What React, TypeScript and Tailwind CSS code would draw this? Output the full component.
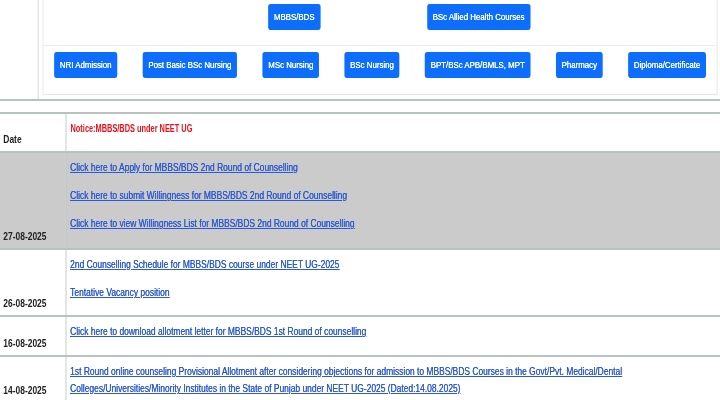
import React from "react";

// the page uses Arial Narrow; no narrow face is installed, so the whole sheet is
// laid out 878px wide in Liberation Sans and squeezed to 82% horizontally
const FONT = { fontFamily: '"Liberation Sans", Arial, sans-serif' };

const topButtons = ["MBBS/BDS", "BSc Allied Health Courses"];
const courseButtons = [
  "NRI Admission",
  "Post Basic BSc Nursing",
  "MSc Nursing",
  "BSc Nursing",
  "BPT/BSc APB/BMLS, MPT",
  "Pharmacy",
  "Diploma/Certificate",
];

const notices = [
  {
    date: "27-08-2025",
    gray: true,
    h: "h-[97px]",
    links: [
      "Click here to Apply for MBBS/BDS 2nd Round of Counselling",
      "Click here to submit Willingness for MBBS/BDS 2nd Round of Counselling",
      "Click here to view Willingness List for MBBS/BDS 2nd Round of Counselling",
    ],
  },
  {
    date: "26-08-2025",
    h: "h-[67px]",
    links: [
      "2nd Counselling Schedule for MBBS/BDS course under NEET UG-2025",
      "Tentative Vacancy position",
    ],
  },
  {
    date: "16-08-2025",
    h: "h-[40px]",
    links: ["Click here to download allotment letter for MBBS/BDS 1st Round of counselling"],
  },
  {
    date: "14-08-2025",
    h: "h-[47px]",
    links: [
      "1st Round online counseling Provisional Allotment after considering objections for admission to MBBS/BDS Courses in the Govt/Pvt. Medical/Dental Colleges/Universities/Minority Institutes in the State of Punjab under NEET UG-2025 (Dated:14.08.2025)",
    ],
  },
];

function Btn({ label }: { label: string }) {
  return (
    <a className="flex h-[26px] items-center rounded-[3px] bg-[#0d6efd] px-[7px] text-[9.6px] text-white [text-shadow:0.15px_0_0_currentColor]">
      {label}
    </a>
  );
}

export default function App() {
  return (
    <div className="h-[400px] w-[720px] overflow-hidden bg-white">
      <div className="w-[878px] origin-top-left scale-x-[0.82] text-[#222]" style={FONT}>
        {/* course menu */}
        <div className="border-b-2 border-[#b6c3bf]">
          <div className="ml-[46px] border-l border-[#c9d0cd] pb-[4px] pl-[5px]">
            <div className="mr-[3px] border-b border-l border-r border-[#e3e7e6]">
              <div className="flex gap-[130px] pb-[15px] pl-[274px] pt-[4px]">
                {topButtons.map((b) => (
                  <Btn key={b} label={b} />
                ))}
              </div>
              <div className="flex justify-between border-t border-[#e8ecea] px-[13px] pb-[16px] pt-[6px]">
                {courseButtons.map((b) => (
                  <Btn key={b} label={b} />
                ))}
              </div>
            </div>
          </div>
        </div>

        {/* notice board */}
        <table className="mt-[11px] w-full border-collapse text-[10.3px]">
          <tbody>
            <tr className="border-y-2 border-[#b6c3bf]">
              <td className="h-[39px] w-[80px] border-r border-[#b6c3bf] px-[4px] pb-[3px] align-bottom font-bold leading-[17px]">
                Date
              </td>
              <td className="px-[5px] pt-[6px] align-top leading-[17px]">
                <span className="inline-block origin-left scale-x-[0.875] text-[10.3px] font-bold text-[#e8101a]">
                  Notice:MBBS/BDS under NEET UG
                </span>
              </td>
            </tr>
            {notices.map((n) => (
              <tr key={n.date} className={`border-b-2 border-[#b6c3bf] ${n.gray ? "bg-[#cbcbcb]" : ""}`}>
                <td className={`${n.h} border-r border-[#b6c3bf] px-[4px] pb-[3px] align-bottom font-bold leading-[17px]`}>
                  {n.date}
                </td>
                <td className="px-[5px] pt-[6px] align-top leading-[17px]">
                  <div className="flex flex-col gap-[11px]">
                    {n.links.map((l) => (
                      <a key={l} className="text-[#2c5ad0] underline [text-shadow:0.2px_0_0_currentColor]">
                        {l}
                      </a>
                    ))}
                  </div>
                </td>
              </tr>
            ))}
          </tbody>
        </table>
      </div>
    </div>
  );
}
